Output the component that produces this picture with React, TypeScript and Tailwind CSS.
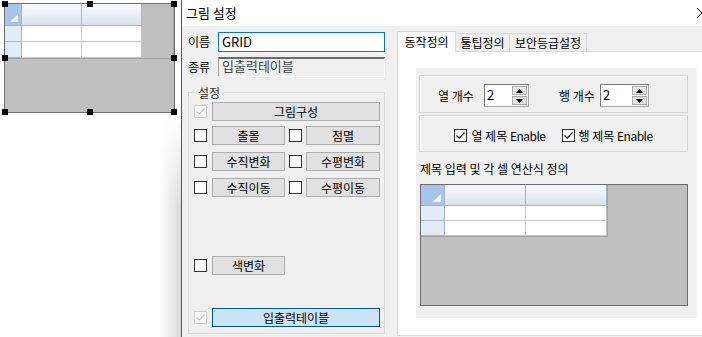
import React from "react";

const CheckMark = ({ color }: { color: string }) => (
  <svg width="11" height="11" viewBox="0 0 11 11">
    <path d="M1.5 5.5 L4.2 8.2 L9.5 2.5" fill="none" stroke={color} strokeWidth="1.2" />
  </svg>
);

const Check = ({ checked, disabled }: { checked?: boolean; disabled?: boolean }) => (
  <span
    className={`flex h-[13px] w-[13px] shrink-0 items-center justify-center border bg-white ${
      disabled ? "border-[#cccccc]" : "border-[#333333]"
    }`}
  >
    {checked && <CheckMark color={disabled ? "#c4c4c4" : "#000000"} />}
  </span>
);

const Btn = ({ label, w, active }: { label: string; w: string; active?: boolean }) => (
  <div
    className={`${w} flex h-[19px] shrink-0 items-center justify-center border leading-none ${
      active ? "border-[#005499] bg-[#cce4f7]" : "border-[#adadad] bg-[#e1e1e1]"
    }`}
  >
    {label}
  </div>
);

const Arrow = ({ up }: { up?: boolean }) => (
  <svg width="7" height="4" viewBox="0 0 7 4">
    <path d={up ? "M0 4 L3.5 0 L7 4 Z" : "M0 0 L7 0 L3.5 4 Z"} fill="#000" />
  </svg>
);

const Spin = ({ w }: { w: string }) => (
  <div className="flex h-[23px] border border-[#7a7a7a] border-r-[#a8a8a8] border-b-[#a8a8a8] bg-white">
    <div className={`${w} pl-[2px] text-[13px] leading-[20px]`}>2</div>
    <div className="flex w-[16px] flex-col gap-[1px] py-[1px] pr-[1px]">
      <div className="flex flex-1 items-center justify-center border border-[#acacac] bg-[#e6e6e6]">
        <Arrow up />
      </div>
      <div className="flex flex-1 items-center justify-center border border-[#acacac] bg-[#e6e6e6]">
        <Arrow />
      </div>
    </div>
  </div>
);

type GridProps = { corner: string; col: string; head: string; row: string };

const MiniGrid = ({ corner, col, head, row }: GridProps) => (
  <div className="flex flex-col border-r border-b border-[#a0a0a0] self-start">
    <div className={`flex ${head}`}>
      <div className={`${corner} relative border-r border-b border-[#9eb6ce] bg-[#a9c4ea]`}>
        <svg className="absolute right-[3px] bottom-[3px]" width="8" height="8" viewBox="0 0 8 8">
          <path d="M8 0 L8 8 L0 8 Z" fill="#f4f7fc" />
        </svg>
      </div>
      {[0, 1].map((i) => (
        <div
          key={i}
          className={`${col} border-r border-b border-[#9eb6ce] bg-gradient-to-b from-[#f8fafd] to-[#dbe3ef]`}
        />
      ))}
    </div>
    {[0, 1].map((r) => (
      <div key={r} className={`flex ${row}`}>
        <div className={`${corner} border-r border-b border-[#9eb6ce] bg-[#e3ebf7]`} />
        <div className={`${col} border-r border-b border-[#c6c6c6] bg-white`} />
        <div className={`${col} border-r border-b border-[#c6c6c6] bg-white`} />
      </div>
    ))}
  </div>
);

const Handle = ({ pos }: { pos: string }) => <div className={`absolute h-[6px] w-[6px] bg-black ${pos}`} />;

export default function App() {
  return (
    <div className="flex h-[337px] w-[702px] overflow-hidden bg-white text-[12px] text-black font-['Noto_Sans_CJK_KR',sans-serif]">
      {/* canvas */}
      <div className="relative w-[181px] shrink-0">
        <div className="relative ml-[4px] mt-[3px] h-[110px] w-[171px] border border-[#6d6d6d] bg-[#c0c0c0]">
          <MiniGrid corner="w-[17px]" col="w-[60px]" head="h-[22px]" row="h-[16px]" />
          <Handle pos="-left-[3px] -top-[3px]" />
          <Handle pos="left-[calc(50%-3px)] -top-[3px]" />
          <Handle pos="-right-[3px] -top-[3px]" />
          <Handle pos="-left-[3px] top-[calc(50%-3px)]" />
          <Handle pos="-right-[3px] top-[calc(50%-3px)]" />
          <Handle pos="-left-[3px] -bottom-[3px]" />
          <Handle pos="left-[calc(50%-3px)] -bottom-[3px]" />
          <Handle pos="-right-[3px] -bottom-[3px]" />
        </div>
        {/* window shadow */}
        <div className="absolute top-[118px] right-0 bottom-0 w-[22px] bg-gradient-to-r from-transparent to-black/15">
          <div className="h-[90px] bg-gradient-to-b from-white to-transparent" />
        </div>
      </div>

      {/* dialog */}
      <div className="flex w-[521px] shrink-0 flex-col border-l border-[#555555]">
        <div className="flex h-[26px] items-center bg-white pl-[4px] text-[13px]">
          <span>그림 설정</span>
          <svg className="ml-auto" width="5" height="10" viewBox="0 0 5 10">
            <path d="M0 0 L5 5 L0 10" fill="none" stroke="#000" strokeWidth="1" />
          </svg>
        </div>

        <div className="flex flex-1 bg-[#f0f0f0]">
          {/* left column */}
          <div className="w-[215px] shrink-0 pl-[6px] pt-[6px]">
            <div className="flex h-[20px] items-center">
              <span className="w-[30px]">이름</span>
              <div className="h-[20px] w-[167px] border border-[#0078d7] bg-white pl-[3px] text-[13px] leading-[18px]">
                GRID
              </div>
            </div>
            <div className="mt-[5px] flex h-[20px] items-center">
              <span className="w-[30px]">종류</span>
              <div className="h-[20px] w-[167px] border-t-2 border-l border-r border-b border-t-[#6a6a6a] border-l-[#a0a0a0] border-r-white border-b-white bg-[#f0f0f0] pl-[3px] text-[13px] leading-[14px] text-[#444444]">
                입출력테이블
              </div>
            </div>

            <div className="relative mt-[15px] h-[242px] w-[197px] border border-[#dcdcdc] pl-[5px] pt-[9px]">
              <span className="absolute -top-[9px] left-[7px] bg-[#f0f0f0] px-[2px] text-[#333333]">설정</span>
              <div className="flex items-center gap-[5px]">
                <Check checked disabled />
                <Btn label="그림구성" w="w-[168px]" />
              </div>
              <div className="mt-[5px] flex items-center">
                <Check />
                <div className="ml-[5px]"><Btn label="출몰" w="w-[73px]" /></div>
                <div className="ml-[4px]"><Check /></div>
                <div className="ml-[4px]"><Btn label="점멸" w="w-[74px]" /></div>
              </div>
              <div className="mt-[7px] flex items-center">
                <Check />
                <div className="ml-[5px]"><Btn label="수직변화" w="w-[73px]" /></div>
                <div className="ml-[4px]"><Check /></div>
                <div className="ml-[4px]"><Btn label="수평변화" w="w-[74px]" /></div>
              </div>
              <div className="mt-[7px] flex items-center">
                <Check />
                <div className="ml-[5px]"><Btn label="수직이동" w="w-[73px]" /></div>
                <div className="ml-[4px]"><Check /></div>
                <div className="ml-[4px]"><Btn label="수평이동" w="w-[74px]" /></div>
              </div>
              <div className="mt-[59px] flex items-center gap-[5px]">
                <Check />
                <Btn label="색변화" w="w-[73px]" />
              </div>
              <div className="mt-[33px] flex items-center gap-[5px]">
                <Check checked disabled />
                <Btn label="입출력테이블" w="w-[168px]" active />
              </div>
            </div>
          </div>

          {/* tab control */}
          <div className="flex flex-1 flex-col pt-[5px]">
            <div className="flex h-[20px] items-start">
              <div className="relative z-10 flex h-[21px] w-[59px] items-center justify-center border-t border-l border-r border-[#d9d9d9] bg-white">
                동작정의
              </div>
              <div className="mt-[2px] flex h-[18px] w-[54px] items-center justify-center border-t border-r border-[#d9d9d9] bg-[#f0f0f0]">
                툴팁정의
              </div>
              <div className="mt-[2px] flex h-[18px] w-[77px] items-center justify-center border-t border-r border-[#d9d9d9] bg-[#f0f0f0]">
                보안등급설정
              </div>
            </div>
            <div className="h-[285px] border-t border-l border-b border-[#d9d9d9] bg-white pl-[18px] pt-[16px]">
              <div className="h-[250px] w-[281px] bg-[#f0f0f0] pl-[3px] pt-[7px]">
                <div className="flex h-[38px] w-[269px] items-start border border-[#d5d5d5] pl-[18px] pt-[8px] shadow-[inset_1px_1px_0_#ffffff]">
                  <span className="w-[46px] leading-[23px]">열 개수</span>
                  <Spin w="w-[27px]" />
                  <span className="ml-[30px] w-[41px] leading-[23px]">행 개수</span>
                  <Spin w="w-[31px]" />
                </div>
                <div className="mt-[2px] flex h-[37px] w-[269px] items-center justify-center gap-[16px] border border-[#d5d5d5] pt-[4px] shadow-[inset_1px_1px_0_#ffffff]">
                  <div className="flex items-center gap-[4px]">
                    <Check checked />
                    <span>
                      열 제목 <span className="tracking-[-0.5px]">Enable</span>
                    </span>
                  </div>
                  <div className="flex items-center gap-[4px]">
                    <Check checked />
                    <span>
                      행 제목 <span className="tracking-[-0.5px]">Enable</span>
                    </span>
                  </div>
                </div>
                <div className="mt-[9px] pl-[1px] leading-[16px]">제목 입력 및 각 셀 연산식 정의</div>
                <div className="mt-[7px] ml-[1px] flex h-[122px] w-[268px] border border-[#6d6d6d] bg-[#c0c0c0]">
                  <MiniGrid corner="w-[24px]" col="w-[81px]" head="h-[21px]" row="h-[15px]" />
                </div>
              </div>
            </div>
          </div>
        </div>
      </div>
    </div>
  );
}
